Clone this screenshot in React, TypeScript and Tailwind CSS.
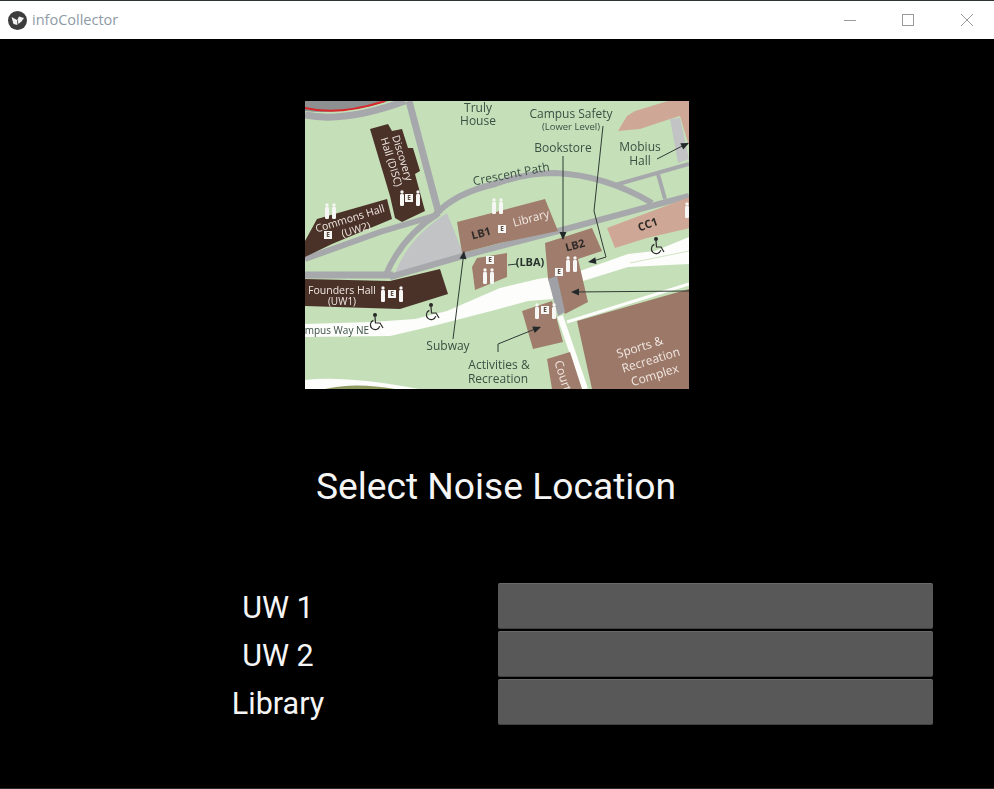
const ink = "#3a5043";
const light = "#f0e8e2";
const roadGray = "#a6a8ab";

function Person({ x, y }: { x: number; y: number }) {
  return (
    <g fill="#f6f6f4">
      <circle cx={x} cy={y - 7} r={1.7} />
      <rect x={x - 2} y={y - 5} width={4} height={12} rx={1.2} />
    </g>
  );
}

function Elevator({ x, y }: { x: number; y: number }) {
  return (
    <g>
      <rect x={x - 4} y={y - 4} width={8} height={8} fill="#f6f6f4" />
      <text x={x} y={y + 2.4} fontSize={6.5} fontWeight={700} fill="#5a4a42" textAnchor="middle" style={{ fontFamily: '"Open Sans", sans-serif' }}>
        E
      </text>
    </g>
  );
}

function Wheelchair({ x, y }: { x: number; y: number }) {
  return (
    <g fill="none" stroke="#2c2c2a" strokeWidth={1.2}>
      <circle cx={x - 2} cy={y - 8} r={1.4} fill="#2c2c2a" />
      <path d="M-2 -6 L-1.5 0 L3 0 L6 5" transform={`translate(${x} ${y})`} />
      <path d="M-3.6 -2.6 A4.8 4.8 0 1 0 2.8 3.2" transform={`translate(${x} ${y})`} />
    </g>
  );
}

function Arrow({ d, tip, angle }: { d: string; tip: [number, number]; angle: number }) {
  return (
    <g>
      <path d={d} fill="none" stroke="#2f3a34" strokeWidth={1} />
      <path d="M0 0 L-8 -3.5 L-8 3.5 Z" fill="#23282a" transform={`translate(${tip[0]} ${tip[1]}) rotate(${angle})`} />
    </g>
  );
}

function Label({ x, y, size = 12, fill = ink, rotate = 0, weight = 500, children }: { x: number; y: number; size?: number; fill?: string; rotate?: number; weight?: number; children: string }) {
  return (
    <text x={x} y={y} fontSize={size} fill={fill} fontWeight={weight} textAnchor="middle" transform={rotate ? `rotate(${rotate} ${x} ${y})` : undefined} style={{ fontFamily: '"Open Sans", sans-serif' }}>
      {children}
    </text>
  );
}

function CampusMap() {
  const brown = "#a07c6c";
  const dark = "#4b3229";
  const tan = "#cfa796";
  return (
    <div className="w-[384px] h-[288px] overflow-hidden shrink-0">
      <svg viewBox="0 0 384 288" width={384} height={288} className="block blur-[0.5px]">
        <rect width={384} height={288} fill="#c5e0b9" />

        {/* top left track */}
        <path d="M0 0 H84 Q40 14 0 10 Z" fill="#8d8f90" />
        <path d="M0 14 Q40 22 100 0" fill="none" stroke={roadGray} strokeWidth={7} />
        <path d="M0 7 Q34 15 80 0" fill="none" stroke="#d8282c" strokeWidth={2} />

        {/* roads */}
        <path d="M104 0 L134 113" fill="none" stroke={roadGray} strokeWidth={7} />
        <path d="M142 112 L158 152 L90 172 Q104 136 142 112 Z" fill="#c1c3c5" />
        <path d="M130 114 Q150 92 190 83 Q220 72 250 72 Q300 74 347 102" fill="none" stroke={roadGray} strokeWidth={6} />
        <path d="M310 84 L384 63" fill="none" stroke={roadGray} strokeWidth={4} />
        <path d="M353 73 L360 98" fill="none" stroke={roadGray} strokeWidth={4} />
        <path d="M85 176 L158 155 L257 129 L384 95" fill="none" stroke={roadGray} strokeWidth={6} />
        <path d="M0 158 L75 131 L132 114" fill="none" stroke={roadGray} strokeWidth={6} />
        <path d="M0 174 H88" fill="none" stroke={roadGray} strokeWidth={7} />
        <path d="M134 112 Q96 136 80 176" fill="none" stroke={roadGray} strokeWidth={6} />
        <path d="M365 18 L375 17 L384 58 L373 62 Z" fill="#c1c3c5" />

        {/* white walkways */}
        <path d="M0 223 L67 221 L110 218 L142 210 L195 187 L233 178 L246 176 L248 198 L223 200 L190 209 L128 225 L85 235 L0 236 Z" fill="#fdfdfb" />
        <path d="M275 170 L323 153 L350 150 L384 136 V163 L323 166 L278 180 Z" fill="#fdfdfb" />
        <path d="M325 162 L384 150" fill="none" stroke="#c5e0b9" strokeWidth={0.8} />
        <path d="M262 221 L384 183" fill="none" stroke="#fdfdfb" strokeWidth={3} />
        <path d="M255 215 L280 288" fill="none" stroke="#fdfdfb" strokeWidth={6} />
        <path d="M0 288 V279 Q40 274 114 288 Z" fill="#fdfdfb" />
        <path d="M20 288 Q50 281 90 288 Z" fill="#8f9a60" />

        {/* dark halls */}
        <path d="M65 28 L83 23 L87 30 L97 28 L103 47 L108 47 L115 70 L110 73 L120 110 L97 121 L90 117 L85 95 Z" fill={dark} />
        <path d="M0 140 L12 118 L82 98 L87 118 L27 143 L0 156 Z" fill={dark} />
        <path d="M0 178 L85 180 L135 168 L143 193 L95 208 L0 205 Z" fill={dark} />

        {/* brown and tan buildings */}
        <path d="M322 15 L330 10 L363 0 H384 V45 L375 15 L365 18 L335 28 L313 30 Z" fill={tan} />
        <path d="M302 127 L385 96 V127 L342 137 L310 147 Z" fill={tan} />
        <path d="M152 121 L240 98 L253 130 L195 142 L157 152 Z" fill={brown} />
        <path d="M240 142 L287 127 L297 150 L273 158 L283 201 L260 213 L243 178 Z" fill={brown} />
        <path d="M243 178 L252 175 L260 211 L253 215 Z" fill="#9fa1a6" />
        <path d="M167 166 L172 157 L202 152 V176 L170 189 Z" fill={brown} />
        <path d="M217 210 L247 200 L258 241 L228 248 Z" fill={brown} />
        <path d="M242 258 L265 251 L277 288 H247 Z" fill={brown} />
        <path d="M272 220 L384 188 V288 H287 Z" fill="#9c7868" />

        {/* restrooms and elevators */}
        <Person x={22} y={111} />
        <Person x={29} y={111} />
        <Elevator x={23} y={134} />
        <Person x={97} y={98} />
        <Elevator x={104} y={97} />
        <Person x={113} y={98} />
        <Person x={189} y={106} />
        <Person x={196} y={106} />
        <Elevator x={197} y={128} />
        <Elevator x={185} y={159} />
        <Person x={180} y={176} />
        <Person x={187} y={176} />
        <Person x={263} y={164} />
        <Person x={270} y={164} />
        <Elevator x={254} y={171} />
        <Person x={232} y={211} />
        <Elevator x={240} y={209} />
        <Person x={249} y={211} />
        <Person x={382} y={110} />
        <Person x={78} y={194} />
        <Elevator x={87} y={193} />
        <Person x={96} y={194} />
        <Wheelchair x={72} y={222} />
        <Wheelchair x={128} y={212} />
        <Wheelchair x={353} y={146} />

        {/* arrows */}
        <Arrow d="M258 55 V138" tip={[258, 139]} angle={90} />
        <Arrow d="M298 25 L289 110 L298 145 L301 156 L285 161" tip={[283, 161]} angle={170} />
        <Arrow d="M352 58 L383 42" tip={[384, 42]} angle={-25} />
        <Arrow d="M148 238 L159 151" tip={[159, 150]} angle={-83} />
        <Arrow d="M384 190 L268 191" tip={[266, 191]} angle={180} />
        <Arrow d="M193 251 V243 L235 226" tip={[236, 226]} angle={-20} />
        <path d="M203 164 L212 163" stroke="#2f3a34" strokeWidth={1} />

        {/* dark text */}
        <Label x={173} y={11}>Truly</Label>
        <Label x={173} y={24}>House</Label>
        <Label x={266} y={17}>Campus Safety</Label>
        <Label x={266} y={29} size={9.5}>(Lower Level)</Label>
        <Label x={258} y={51}>Bookstore</Label>
        <Label x={335} y={50}>Mobius</Label>
        <Label x={335} y={64}>Hall</Label>
        <Label x={207} y={77} rotate={-11}>Crescent Path</Label>
        <Label x={177} y={136} rotate={-15} size={11} weight={700} fill="#2e2a28">LB1</Label>
        <Label x={271} y={148} rotate={-15} size={11} weight={700} fill="#2e2a28">LB2</Label>
        <Label x={344} y={127} rotate={-20} size={11} weight={700} fill="#2e2a28">CC1</Label>
        <Label x={225} y={165} size={11} weight={700} fill="#27322c">(LBA)</Label>
        <Label x={26} y={233} size={10}>Campus Way NE</Label>
        <Label x={143} y={249}>Subway</Label>
        <Label x={194} y={268}>Activities &amp;</Label>
        <Label x={193} y={282}>Recreation</Label>

        {/* light text */}
        <Label x={94} y={58} size={10.5} rotate={73} fill={light}>Discovery</Label>
        <Label x={83} y={62} size={10.5} rotate={73} fill={light}>Hall (DISC)</Label>
        <Label x={46} y={121} size={10.5} rotate={-17} fill={light}>Commons Hall</Label>
        <Label x={52} y={132} size={10.5} rotate={-17} fill={light}>(UW2)</Label>
        <Label x={227} y={121} size={11.5} rotate={-15} fill={light}>Library</Label>
        <Label x={37} y={193} size={10.5} fill={light}>Founders Hall</Label>
        <Label x={37} y={204} size={10} fill={light}>(UW1)</Label>
        <Label x={336} y={250} rotate={-17} fill={light}>Sports &amp;</Label>
        <Label x={347} y={263} rotate={-17} fill={light}>Recreation</Label>
        <Label x={351} y={278} rotate={-17} fill={light}>Complex</Label>
        <Label x={254} y={276} rotate={72} fill={light}>Court</Label>
      </svg>
    </div>
  );
}

function TitleBar() {
  return (
    <div className="h-[39px] bg-white border-t border-[#2f3437] flex items-center justify-between shrink-0">
      <div className="flex items-center pl-2 gap-[5px]">
        <svg width={19} height={19} viewBox="0 0 19 19">
          <circle cx={9.5} cy={9.5} r={9.5} fill="#3c3c3c" />
          <path d="M3.5 6 L9 9 L9.5 14 L5.5 13 Z" fill="#f2f2f2" />
          <path d="M9.5 8.5 L11 5.5 L16 7 L13.5 10.5 L10.5 13 Z" fill="#f2f2f2" />
        </svg>
        <span className="text-[14.5px] text-[#8e9aa6] font-['Open_Sans',sans-serif]">infoCollector</span>
      </div>
      <div className="flex items-center">
        <div className="w-[58px] h-[38px] flex items-center justify-center">
          <div className="w-3 h-px bg-[#9a9a9a]" />
        </div>
        <div className="w-[58px] h-[38px] flex items-center justify-center">
          <div className="w-3 h-3 border border-[#9a9a9a]" />
        </div>
        <div className="ml-[3px] w-[54px] h-[38px] flex items-center justify-center">
          <svg width={12} height={12} viewBox="0 0 12 12">
            <path d="M0 0 L12 12 M12 0 L0 12" stroke="#9a9a9a" strokeWidth={1} />
          </svg>
        </div>
      </div>
    </div>
  );
}

const rows = ["UW 1", "UW 2", "Library"];

export default function App() {
  return (
    <div className="w-[994px] h-[789px] flex flex-col bg-black overflow-hidden font-['Roboto',sans-serif]">
      <TitleBar />
      <div className="flex-1 flex flex-col border-b border-[#2a2a2a]">
        <div className="flex justify-center pt-[62px]">
          <CampusMap />
        </div>
        <h1 className="mt-[75px] pr-[2px] text-center text-[#f5f5f5] text-[37.2px] leading-[44px] font-normal">Select Noise Location</h1>
        <div className="mt-[75px] flex flex-col gap-[2px] pl-[60px]">
          {rows.map((name) => (
            <div key={name} className="flex items-center h-[46px]">
              <span className="w-[438px] pr-[2px] pt-[4px] text-center text-[#f5f5f5] text-[30.5px]">{name}</span>
              <button className="w-[435px] h-full rounded-[2px] bg-[#585858] border-t border-t-[#6a6a6a] border-b border-b-[#414141]" />
            </div>
          ))}
        </div>
      </div>
    </div>
  );
}
